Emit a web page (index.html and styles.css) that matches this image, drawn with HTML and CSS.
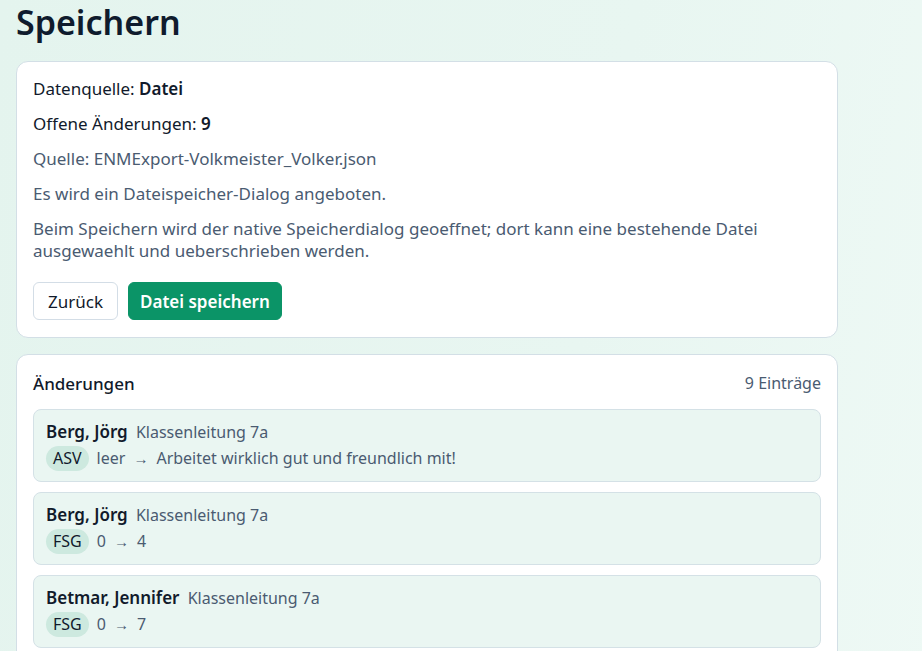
FILE: index.html
```html
<!DOCTYPE html>
<html lang="de">
  <head>
    <meta charset="UTF-8" />
    <meta name="viewport" content="width=device-width, initial-scale=1.0" />
    <title>Speichern</title>
    <link rel="stylesheet" href="styles.css">
  </head>
  <body>
    <main class="page">
      <h1 class="page-title">Speichern</h1>

      <section class="card">
        <p class="line">Datenquelle: <strong>Datei</strong></p>
        <p class="line">Offene Änderungen: <strong>9</strong></p>
        <p class="line muted">Quelle: ENMExport-Volkmeister_Volker.json</p>
        <p class="line muted">Es wird ein Dateispeicher-Dialog angeboten.</p>
        <p class="line muted">Beim Speichern wird der native Speicherdialog geoeffnet; dort kann eine bestehende Datei ausgewaehlt und ueberschrieben werden.</p>
        <div class="actions">
          <button class="btn btn-secondary" type="button">Zurück</button>
          <button class="btn btn-primary" type="button">Datei speichern</button>
        </div>
      </section>

      <section class="card">
        <div class="card-head">
          <h2 class="card-title">Änderungen</h2>
          <span class="count">9 Einträge</span>
        </div>
        <ul class="changes">
          <li class="change">
            <div class="who"><span class="name">Berg, Jörg</span> <span class="role">Klassenleitung 7a</span></div>
            <div class="diff"><span class="tag">ASV</span> <span>leer</span> <span class="arrow">→</span> <span>Arbeitet wirklich gut und freundlich mit!</span></div>
          </li>
          <li class="change">
            <div class="who"><span class="name">Berg, Jörg</span> <span class="role">Klassenleitung 7a</span></div>
            <div class="diff"><span class="tag">FSG</span> <span>0</span> <span class="arrow">→</span> <span>4</span></div>
          </li>
          <li class="change">
            <div class="who"><span class="name">Betmar, Jennifer</span> <span class="role">Klassenleitung 7a</span></div>
            <div class="diff"><span class="tag">FSG</span> <span>0</span> <span class="arrow">→</span> <span>7</span></div>
          </li>
          <li class="change">
            <div class="who"><span class="name">Betmar, Jennifer</span> <span class="role">Klassenleitung 7a</span></div>
            <div class="diff"><span class="tag">ASV</span> <span>leer</span> <span class="arrow">→</span> <span>Zeigt Interesse am Unterricht.</span></div>
          </li>
        </ul>
      </section>
    </main>
  </body>
</html>
```

FILE: styles.css
```css
body {
  font-family: "Noto Sans", "Open Sans", sans-serif;
  margin: 0;
  padding: 0;
  min-height: 100vh;
  color: #111a2b;
  background: linear-gradient(100deg, #e4f4ee 0%, #e8f6f1 60%, #eef9f5 100%);
}

.page {
  width: 822px;
  padding: 0 16px 40px;
}

.page-title {
  font-size: 34px;
  font-weight: 600;
  line-height: 44px;
  margin: 0 0 17px;
  color: #0f1b2d;
}

.card {
  background-color: #fff;
  border: 1px solid #d3dfe6;
  border-radius: 12px;
  padding: 16px 16px 17px;
  margin-bottom: 16px;
}

.line {
  font-size: 17px;
  line-height: 22px;
  margin: 0 0 13px;
}

.line strong {
  font-weight: 600;
}

.muted {
  color: #4a5b71;
}

.actions {
  display: flex;
  gap: 10px;
  margin-top: 20px;
}

.btn {
  font-family: inherit;
  font-size: 17px;
  height: 38px;
  padding: 0 14px;
  border-radius: 6px;
  cursor: pointer;
}

.btn-secondary {
  background-color: #fff;
  color: #111a2b;
  border: 1px solid #d3dde6;
}

.btn-primary {
  background-color: #0b9467;
  color: #fff;
  border: 1px solid #0b9467;
  font-weight: 600;
  padding: 0 11px;
}

.card-head {
  display: flex;
  justify-content: space-between;
  align-items: center;
  margin-bottom: 13px;
  line-height: 25px;
}

.card-title {
  font-size: 17px;
  font-weight: 500;
  margin: 0;
}

.count {
  font-size: 16px;
  color: #4a5b71;
}

.changes {
  list-style: none;
  margin: 0;
  padding: 0;
  display: flex;
  flex-direction: column;
  gap: 10px;
}

.change {
  background-color: #eaf6f2;
  border: 1px solid #d4e1e6;
  border-radius: 8px;
  padding: 11px 12px 10px;
}

.who {
  line-height: 22px;
  margin-bottom: 3px;
}

.name {
  font-size: 17px;
  font-weight: 600;
  margin-right: 4px;
}

.role {
  font-size: 16px;
  color: #4a5b71;
}

.diff {
  display: flex;
  align-items: center;
  gap: 8px;
  font-size: 16px;
  color: #4a5b71;
  line-height: 25px;
}

.tag {
  background-color: #cde9df;
  color: #111a2b;
  border-radius: 13px;
  padding: 0 7px;
  height: 25px;
}

.arrow {
  font-size: 15px;
}
```
